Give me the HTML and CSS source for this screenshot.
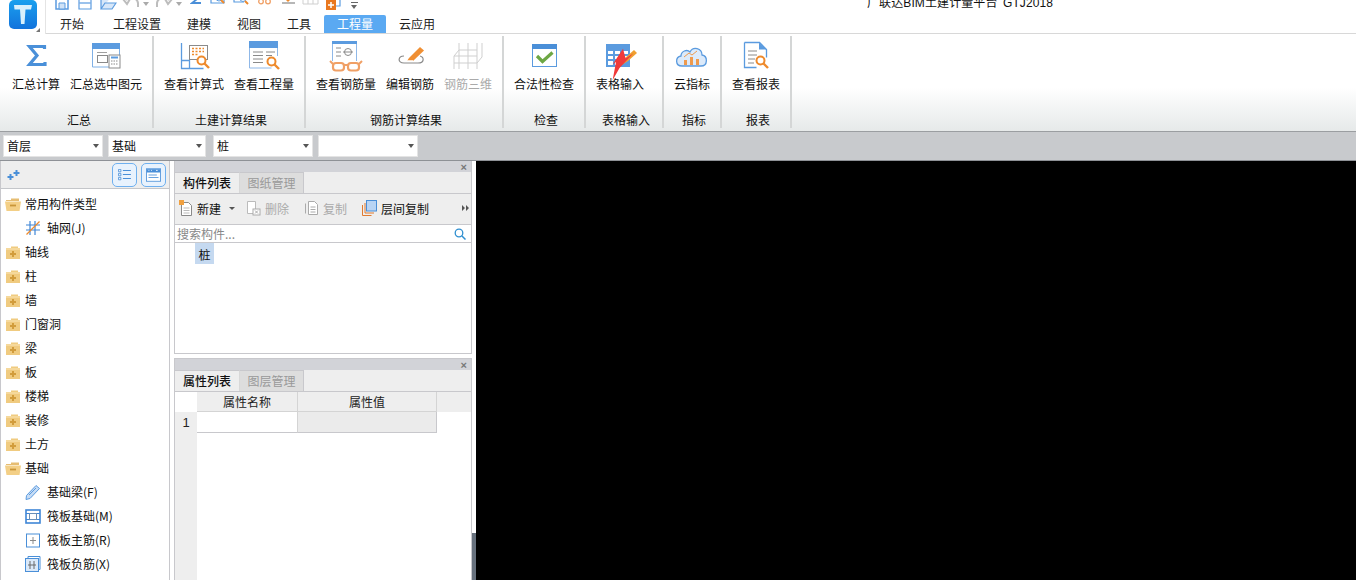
FILE: index.html
```html
<!DOCTYPE html>
<html lang="zh-CN">
<head>
  <meta charset="UTF-8" />
  <title>广联达BIM土建计量平台 GTJ2018</title>
  <link rel="stylesheet" href="styles.css">
</head>
<body>

<svg class="defs" width="0" height="0">
  <symbol id="folder" viewBox="0 0 16 14">
    <path d="M1 3h5V1.500h7V3h2v11H1z" fill="#f0cb80"/>
    <path d="M1 4h14" stroke="#fbe6b8" stroke-width="1"/>
    <path d="M8 6v6M5 9h6" stroke="#d29c3c" stroke-width="2"/>
  </symbol>
  <symbol id="folder-open" viewBox="0 0 16 14">
    <path d="M1 3h5V1.500h8V4H1z" fill="#e6bd72"/>
    <path d="M0 4.500h16l-1.500 9.500H1.500z" fill="#f3cf86"/>
    <path d="M5 8.500h6" stroke="#c99639" stroke-width="1.800"/>
  </symbol>
  <symbol id="lens" viewBox="0 0 14 14">
    <circle cx="5.500" cy="5.500" r="4" fill="#fff" stroke="#ee8a2c" stroke-width="2"/>
    <path d="M8.500 8.500l4.500 4.500" stroke="#ee8a2c" stroke-width="2.400"/>
  </symbol>
</svg>

<header class="topbar">
  <div class="logo-box">
    <svg class="logo" width="28" height="29" viewBox="0 0 28 29">
      <defs>
        <linearGradient id="logoFill" x1="0" y1="0" x2="0" y2="1">
          <stop offset="0" stop-color="#1aa0ee"/>
          <stop offset="1" stop-color="#1273dc"/>
        </linearGradient>
      </defs>
      <rect width="28" height="29" rx="5" fill="url(#logoFill)"/>
      <path d="M5 5h18l-1 4.500h-5.500L15.500 24h-3.500L11 9.500H5.500z" fill="#d8f0fc"/>
    </svg>
    <i class="logo-corner"></i>
  </div>
  <div class="top-right">
    <div class="quick">
      <svg class="q q-save" width="14" height="16" viewBox="0 0 14 16"><path d="M1 0h12v15H1z" fill="#fff" stroke="#5b9bdf" stroke-width="1.500"/><path d="M4 9h6v6H4z" fill="#cfe2f7" stroke="#5b9bdf"/></svg>
      <svg class="q q-saveas" width="14" height="16" viewBox="0 0 14 16"><path d="M1 0h12v15H1z" fill="#fff" stroke="#5b9bdf" stroke-width="1.200"/><path d="M1 9h12" stroke="#7aaee6" stroke-width="1.500"/></svg>
      <svg class="q q-open" width="17" height="16" viewBox="0 0 17 16"><path d="M1 15V4h4l9-4M1 15l4-6h11l-4 6z" fill="#d7e7f9" stroke="#5b9bdf" stroke-width="1.200"/></svg>
      <svg class="q q-undo" width="18" height="16" viewBox="0 0 18 16"><path d="M4 6c4-3 11-3 12 3v4M1 5l4 5 3-5" fill="none" stroke="#bdbdbd" stroke-width="2"/></svg>
      <i class="q-caret"></i>
      <svg class="q q-redo" width="18" height="16" viewBox="0 0 18 16"><path d="M14 6c-4-3-11-3-12 3v4M17 5l-4 5-3-5" fill="none" stroke="#bdbdbd" stroke-width="2"/></svg>
      <i class="q-caret"></i>
      <svg class="q q-sum" width="11" height="16" viewBox="0 0 11 16"><path d="M10 1H2l4.500 4.500L2 9h9" fill="none" stroke="#4a8fd8" stroke-width="1.800"/></svg>
      <svg class="q q-calc" width="16" height="16" viewBox="0 0 16 16"><path d="M1 0v9h13V0" fill="none" stroke="#5b9bdf" stroke-width="1.200"/><circle cx="9" cy="4" r="3" fill="#fff" stroke="#5b9bdf"/><path d="M11 6l3 3" stroke="#ee8a2c" stroke-width="2"/></svg>
      <svg class="q q-qty" width="16" height="16" viewBox="0 0 16 16"><path d="M1 0v8h10M3 3h4M3 5.500h3" fill="none" stroke="#5b9bdf" stroke-width="1.200"/><circle cx="10" cy="4.500" r="3" fill="#fff" stroke="#5b9bdf"/><path d="M12 7l3 3" stroke="#ee8a2c" stroke-width="2"/></svg>
      <svg class="q q-glass" width="15" height="16" viewBox="0 0 15 16"><path d="M2 0h11v5H2z" fill="none" stroke="#e8c4a8"/><circle cx="4" cy="7.500" r="2.300" fill="none" stroke="#f0a066" stroke-width="1.300"/><circle cx="11" cy="7.500" r="2.300" fill="none" stroke="#f0a066" stroke-width="1.300"/></svg>
      <svg class="q q-pen" width="15" height="16" viewBox="0 0 15 16"><path d="M5 6l6-6 2 2-6 6z" fill="#ee8a2c"/><path d="M1 9h13" stroke="#888" stroke-width="1.200"/></svg>
      <svg class="q q-grid" width="17" height="16" viewBox="0 0 17 16"><path d="M1 1l4-1h11v10H1zM1 5h15M6 0v10M11 0v10" fill="none" stroke="#cfcfcf"/></svg>
      <svg class="q q-add" width="15" height="18" viewBox="0 0 15 18"><path d="M9 0h5v12H9" fill="none" stroke="#5b9bdf" stroke-width="1.200"/><rect y="6" width="10" height="10" fill="#e9781f"/><path d="M5 8v6M2 11h6" stroke="#fff" stroke-width="1.500"/></svg>
      <i class="q-more"></i>
      <span class="app-title">广联达BIM土建计量平台 GTJ2018</span>
    </div>
    <nav class="tabs">
      <span class="tab tab-first">开始</span>
      <span class="tab">工程设置</span>
      <span class="tab">建模</span>
      <span class="tab">视图</span>
      <span class="tab">工具</span>
      <span class="tab active">工程量</span>
      <span class="tab">云应用</span>
    </nav>
  </div>
</header>

<section class="ribbon">
  <div class="group g-sum">
    <div class="btns">
      <div class="btn">
        <svg width="36" height="32" viewBox="0 0 36 32"><path d="M26.500 9V6.500H11.500L19 15.500 11.500 24.500H27V22" fill="none" stroke="#4a90d9" stroke-width="3.200"/></svg>
        <span>汇总计算</span>
      </div>
      <div class="btn">
        <svg width="36" height="32" viewBox="0 0 36 32"><path d="M4.500 8h27v19h-27z" fill="#fff" stroke="#7fb0e6"/><rect x="4" y="3" width="28" height="6" fill="#5b9bdf"/><rect x="9.500" y="15.500" width="10" height="7" fill="none" stroke="#8a8a8a"/><path d="M9 12.500h10" stroke="#a0a0a0"/><rect x="21" y="15" width="11" height="13" fill="#fff" stroke="#8a8a8a"/><path d="M23 17.500h7" stroke="#5b9bdf" stroke-width="2"/><path d="M23 21h7M23 24h7" stroke="#8a8a8a" stroke-dasharray="1.500 1"/></svg>
        <span>汇总选中图元</span>
      </div>
    </div>
    <div class="group-name">汇总</div>
  </div>

  <div class="group g-civil">
    <div class="btns">
      <div class="btn">
        <svg width="36" height="32" viewBox="0 0 36 32"><path d="M5.500 3v25.500h22M5.500 20.500h8v8" fill="none" stroke="#5b9bdf" stroke-width="1.300"/><rect x="13.500" y="5.500" width="18" height="14" fill="#fff" stroke="#8a8a8a"/><path d="M16 8.500h12M16 11.500h12M16 14.500h6" stroke="#ee8a2c" stroke-width="1.600" stroke-dasharray="2 1.500"/><use href="#lens" x="20" y="15" width="14" height="14"/></svg>
        <span>查看计算式</span>
      </div>
      <div class="btn">
        <svg width="36" height="32" viewBox="0 0 36 32"><rect x="3" y="1" width="29" height="7" fill="#5b9bdf"/><path d="M3.500 8v20h22M31.500 8v8" fill="none" stroke="#8fb8e8"/><path d="M7 12h10M7 15.500h10M7 19h10M7 22.500h10M20 12h9M20 15.500h6" stroke="#8a8a8a"/><use href="#lens" x="20" y="16" width="14" height="14"/></svg>
        <span>查看工程量</span>
      </div>
    </div>
    <div class="group-name">土建计算结果</div>
  </div>

  <div class="group g-rebar">
    <div class="btns">
      <div class="btn">
        <svg width="36" height="32" viewBox="0 0 36 32"><rect x="4" y="1" width="25" height="3" fill="#5b9bdf"/><path d="M4.500 4v17M28.500 4v17" fill="none" stroke="#8fb8e8"/><path d="M8 8h5M8 12h5M8 16h5M15 12h10" stroke="#8a8a8a"/><circle cx="20" cy="12" r="3.500" fill="none" stroke="#8a8a8a"/><rect x="5" y="23" width="11" height="7.500" rx="3" fill="#fff" stroke="#f0a066" stroke-width="2.200"/><rect x="20" y="23" width="11" height="7.500" rx="3" fill="#fff" stroke="#f0a066" stroke-width="2.200"/><path d="M16 25h4M5 24l-3-3M31 24l3-3" stroke="#f0a066" stroke-width="2"/></svg>
        <span>查看钢筋量</span>
      </div>
      <div class="btn">
        <svg width="36" height="32" viewBox="0 0 36 32"><path d="M17 18l11-11 4 3.500-11 10.500h-6z" fill="#f08f33"/><path d="M12 16c-6 0-7 7 0 7h14c7 0 6-6 2-7" fill="none" stroke="#8a8a8a" stroke-width="1.200"/><path d="M15 21h6" stroke="#fff" stroke-width="1.500"/></svg>
        <span>编辑钢筋</span>
      </div>
      <div class="btn">
        <svg width="36" height="32" viewBox="0 0 36 32"><path d="M9 3v26M18 3v26M27 3v26M9 10l-5 6h23M4 16v13M27 10H9M4 23h23l5-6M32 3v14" fill="none" stroke="#cfcfcf"/></svg>
        <span class="off">钢筋三维</span>
      </div>
    </div>
    <div class="group-name">钢筋计算结果</div>
  </div>

  <div class="group g-check">
    <div class="btns">
      <div class="btn">
        <svg width="36" height="32" viewBox="0 0 36 32"><rect x="6.500" y="4.500" width="24" height="22" fill="#fff" stroke="#5b9bdf"/><rect x="6" y="4" width="25" height="5" fill="#4a8fd8"/><path d="M11 16l5.500 5.500 10-9" fill="none" stroke="#6da744" stroke-width="3.200"/></svg>
        <span>合法性检查</span>
      </div>
    </div>
    <div class="group-name">检查</div>
  </div>

  <div class="group g-table">
    <div class="btns">
      <div class="btn">
        <svg width="36" height="32" viewBox="0 0 36 32"><rect x="4" y="4" width="24" height="23" fill="#5b9bdf"/><path d="M6 11h5v3H6zM13 11h5v3h-5zM20 11h6v3h-6zM6 16h5v3H6zM13 16h5v3h-5zM20 16h6v3h-6zM6 21h5v4H6zM13 21h5v4h-5z" fill="#fff"/><path d="M20 25l3-7 9-8 3 3-9 8z" fill="#f0a030"/></svg>
        <span>表格输入</span>
      </div>
    </div>
    <div class="group-name">表格输入</div>
  </div>

  <div class="group g-cloud">
    <div class="btns">
      <div class="btn">
        <svg width="36" height="32" viewBox="0 0 36 32"><path d="M8 26c-7 0-7-9-1-10 0-5 6-7 9-4 3-6 12-4 12 3 6 1 6 11-1 11z" fill="#dceafa" stroke="#5b9bdf" stroke-width="1.300"/><path d="M10 25v-5h3v5zM16 25v-8h3v8zM22 25v-6h3v6z" fill="#ee9a4d"/><path d="M10 17l5-4 3 2 5-4" fill="none" stroke="#ee9a4d"/></svg>
        <span>云指标</span>
      </div>
    </div>
    <div class="group-name">指标</div>
  </div>

  <div class="group g-report">
    <div class="btns">
      <div class="btn">
        <svg width="36" height="32" viewBox="0 0 36 32"><path d="M6.500 2.500h15l7 7v8M6.500 2.500v25h12" fill="#fff" stroke="#5b9bdf" stroke-width="1.300"/><path d="M21 2.500v7h7.500z" fill="#5b9bdf"/><path d="M10 11h9M10 15h9M10 19h7M10 23h6" stroke="#8a8a8a"/><use href="#lens" x="17" y="15" width="14" height="14"/></svg>
        <span>查看报表</span>
      </div>
    </div>
    <div class="group-name">报表</div>
  </div>

  <svg class="red-arrow" width="24" height="33" viewBox="0 0 26 38"><path d="M1 37L5 16 1 19 13 1 16 12 25 6 9 23z" fill="#f03a3a"/></svg>
</section>

<div class="selbar">
  <div class="sel sel-a"><span>首层</span><i></i></div>
  <div class="sel sel-b"><span>基础</span><i></i></div>
  <div class="sel sel-c"><span>桩</span><i></i></div>
  <div class="sel sel-d"><span></span><i></i></div>
</div>

<main class="main">
  <aside class="side">
    <div class="side-head">
      <svg class="spark" width="13" height="10" viewBox="0 0 13 10"><path d="M3.500 4v6M0.500 7h6M9.500 0v6M6.500 3h6" stroke="#4a8fd8" stroke-width="2"/></svg>
      <span class="side-btn">
        <svg width="13" height="12" viewBox="0 0 16 15"><path d="M.5.500h3v3h-3zM.5 5.500h3v3h-3zM.5 10.500h3v3h-3z" fill="none" stroke="#4a8fd8"/><path d="M6 2h10M6 7h10M6 12h10" stroke="#4a8fd8" stroke-width="1.300"/></svg>
      </span>
      <span class="side-btn">
        <svg width="15" height="14" viewBox="0 0 18 16"><rect x=".5" y=".5" width="17" height="15" fill="#fff" stroke="#4a8fd8"/><rect x="1" y="1" width="16" height="4" fill="#4a8fd8"/><path d="M3 2.500h1M6 2.500h1M12 2.500h2" stroke="#fff"/><path d="M3 8h10M3 11h12" stroke="#4a8fd8"/></svg>
      </span>
    </div>
    <ul class="tree">
      <li class="row"><svg class="ficon" width="16" height="14"><use href="#folder-open"/></svg>常用构件类型</li>
      <li class="row child">
        <svg class="cicon" width="16" height="16" viewBox="0 0 16 16"><path d="M5 1v14M10 1v14M1 5h14M1 10h14" stroke="#3f86d6" stroke-width="1.200"/><path d="M14.500 1.500L1.500 14.500" stroke="#ee8a2c" stroke-width="1.200"/></svg>轴网(J)
      </li>
      <li class="row"><svg class="ficon" width="16" height="14"><use href="#folder"/></svg>轴线</li>
      <li class="row"><svg class="ficon" width="16" height="14"><use href="#folder"/></svg>柱</li>
      <li class="row"><svg class="ficon" width="16" height="14"><use href="#folder"/></svg>墙</li>
      <li class="row"><svg class="ficon" width="16" height="14"><use href="#folder"/></svg>门窗洞</li>
      <li class="row"><svg class="ficon" width="16" height="14"><use href="#folder"/></svg>梁</li>
      <li class="row"><svg class="ficon" width="16" height="14"><use href="#folder"/></svg>板</li>
      <li class="row"><svg class="ficon" width="16" height="14"><use href="#folder"/></svg>楼梯</li>
      <li class="row"><svg class="ficon" width="16" height="14"><use href="#folder"/></svg>装修</li>
      <li class="row"><svg class="ficon" width="16" height="14"><use href="#folder"/></svg>土方</li>
      <li class="row"><svg class="ficon" width="16" height="14"><use href="#folder-open"/></svg>基础</li>
      <li class="row child">
        <svg class="cicon" width="16" height="16" viewBox="0 0 16 16"><path d="M1.500 11.500l9.500-10 3.500 3-9.500 10-4 1z" fill="#c6dcf5" stroke="#5b9bdf"/><path d="M4 11l7-7" stroke="#5b9bdf"/></svg>基础梁(F)
      </li>
      <li class="row child">
        <svg class="cicon" width="16" height="16" viewBox="0 0 16 16"><rect x="1" y="2" width="14" height="13" fill="none" stroke="#3f86d6" stroke-width="1.600"/><rect x="4.500" y="5.500" width="7" height="6" fill="none" stroke="#6a8fb8"/><path d="M1 5.500h3M12 5.500h3M1 11.500h3M12 11.500h3" stroke="#3f86d6"/></svg>筏板基础(M)
      </li>
      <li class="row child">
        <svg class="cicon" width="16" height="16" viewBox="0 0 16 16"><rect x="1.500" y="2" width="13" height="13" fill="#fff" stroke="#4a8fd8"/><path d="M8 5v7M5 8.500h6" stroke="#8a8a8a"/></svg>筏板主筋(R)
      </li>
      <li class="row child">
        <svg class="cicon" width="16" height="16" viewBox="0 0 16 16"><path d="M3 2V.5h12v13h-1" fill="none" stroke="#4a8fd8"/><rect x=".5" y="2.500" width="13" height="13" fill="#dbe9f9" stroke="#4a8fd8"/><path d="M5 5v8M9 5v8M3 9h8" stroke="#6a6a6a"/></svg>筏板负筋(X)
      </li>
    </ul>
  </aside>

  <div class="mid">
    <div class="panel panel-top">
      <div class="strip"><span>×</span></div>
      <div class="ptabs"><span class="ptab on">构件列表</span><span class="ptab">图纸管理</span></div>
      <div class="ptools">
        <span class="tool t-new">
          <svg width="14" height="16" viewBox="0 0 14 16"><path d="M2.500 2.500h7l3 3v10h-10z" fill="#fff" stroke="#8a8a8a"/><path d="M4.500 8h6M4.500 10.500h6M4.500 13h6" stroke="#bbb"/><rect width="5" height="5" fill="#f0a040"/></svg>
          新建<i class="drop"></i>
        </span>
        <span class="tool off t-del">
          <svg width="15" height="16" viewBox="0 0 15 16"><path d="M1.500 1.500h8v12h-8z" fill="#fff" stroke="#bbb"/><rect x="7" y="9" width="7" height="6" fill="#fff" stroke="#aaa"/><path d="M9 10.500l3 3M12 10.500l-3 3" stroke="#aaa"/></svg>
          删除
        </span>
        <span class="tool off t-copy">
          <svg width="14" height="16" viewBox="0 0 14 16"><path d="M3.500 1.500h6l3 3v10h-9z" fill="#fff" stroke="#aaa"/><path d="M.5 3.500v10" stroke="#aaa"/><path d="M5.500 7h5M5.500 9.500h5M5.500 12h5" stroke="#aaa"/></svg>
          复制
        </span>
        <span class="tool t-floor">
          <svg width="15" height="16" viewBox="0 0 15 16"><path d="M.5 5v10.500h9M3 3v10h9" fill="none" stroke="#e07a30"/><rect x="4.500" y=".5" width="10" height="10.500" fill="#b8d4f4" stroke="#4a8fd8"/></svg>
          层间复制
        </span>
        <svg class="more" width="7" height="6" viewBox="0 0 7 6"><path d="M0 0l3 3-3 3zM4 0l3 3-3 3z" fill="#555"/></svg>
      </div>
      <div class="search">
        <span>搜索构件...</span>
        <svg width="12" height="12" viewBox="0 0 12 12"><circle cx="5" cy="5" r="3.800" fill="none" stroke="#2f8fd0" stroke-width="1.300"/><path d="M8 8l3.500 3.500" stroke="#2f8fd0" stroke-width="1.500"/></svg>
      </div>
      <div class="plist"><span class="picked">桩</span></div>
    </div>

    <div class="panel panel-bottom">
      <div class="strip"><span>×</span></div>
      <div class="ptabs"><span class="ptab on">属性列表</span><span class="ptab">图层管理</span></div>
      <div class="props">
        <div class="ph-blank"></div>
        <div class="ph">属性名称</div>
        <div class="ph">属性值</div>
        <div class="ph-end"></div>
        <div class="rownum">1</div>
        <div class="cell-name"></div>
        <div class="cell-val"></div>
        <div></div>
        <div class="rest-num"></div>
        <div class="rest"></div>
      </div>
    </div>
  </div>

  <div class="vscroll"><div class="thumb"></div></div>
  <div class="canvas"></div>
</main>

</body>
</html>
```

FILE: styles.css
```css
* { box-sizing: border-box; }
html, body { margin: 0; height: 580px; overflow: hidden; }
body { width: 1356px; background: #fff; color: #111; font: 12px "Noto Sans CJK SC", "Liberation Sans", sans-serif; display: flex; flex-direction: column; }
.defs { position: absolute; }
svg { display: block; flex: none; }
i { display: block; }
ul { list-style: none; margin: 0; padding: 0; }

/* title area */
.topbar { height: 34px; flex: none; display: flex; }
.logo-box { width: 46px; border-right: 1px solid #e4e4e4; padding-left: 9px; position: relative; }
.logo-corner { position: absolute; left: 36px; top: 28px; width: 0; height: 0; border-left: 4px solid transparent; border-bottom: 4px solid #777; }
.top-right { flex: 1; display: flex; flex-direction: column; border-bottom: 1px solid #d8d8d8; }
.quick { height: 15px; display: flex; align-items: flex-start; }
.q { margin-top: -6px; }
.q-save { margin-left: 9px; }
.q-saveas { margin-left: 9px; }
.q-open { margin-left: 8px; }
.q-undo { margin-left: 5px; }
.q-redo { margin-left: 6px; }
.q-sum { margin-left: 8px; }
.q-calc { margin-left: 9px; }
.q-qty { margin-left: 7px; }
.q-glass { margin-left: 8px; }
.q-pen { margin-left: 9px; }
.q-grid { margin-left: 6px; }
.q-add { margin-left: 7px; }
.q-caret { width: 0; height: 0; margin: 2px 0 0 3px; border: 3px solid transparent; border-top: 4px solid #aaa; border-bottom: 0; }
.q-more { width: 7px; height: 6px; margin: 2px 0 0 10px; border-top: 1px solid #666; position: relative; }
.q-more::after { content: ""; position: absolute; left: 0; top: 2px; border: 3.500px solid transparent; border-top: 4px solid #666; border-bottom: 0; }
.app-title { margin-left: 509px; line-height: 6px; white-space: nowrap; font-family: "Liberation Sans", "Noto Sans CJK SC", sans-serif; word-spacing: 2px; letter-spacing: .1px; }
.tabs { flex: 1; display: flex; align-items: stretch; margin-left: 1px; }
.tab { padding: 0 13px; line-height: 17px; color: #222; height: 18px; }
.tab-first { margin-right: 3px; }
.tab.active { background: #5aa9f2; color: #fff; border-radius: 2px 2px 0 0; }

/* ribbon */
.ribbon { height: 98px; flex: none; display: flex; position: relative; background: linear-gradient(#fff 55%, #e6e9e9); border-bottom: 1px solid #9b9ea1; }
.group { height: 92px; margin-top: 2px; border-right: 2px solid #d4d6d6; display: flex; flex-direction: column; padding-left: 10px; }
.g-sum { width: 154px; padding-left: 12px; }
.g-civil { width: 152px; }
.g-rebar { width: 198px; }
.g-check { width: 82px; }
.g-table { width: 78px; }
.g-cloud { width: 58px; }
.g-report { width: 70px; }
.btns { display: flex; gap: 10px; height: 76px; }
.btn { display: flex; flex-direction: column; align-items: center; white-space: nowrap; }
.btn svg { margin-top: 4px; }
.btn span { line-height: 18px; margin-top: 3px; }
.btn .off { color: #aaa; }
.group-name { margin-left: -6px; text-align: center; line-height: 16px; }
.red-arrow { position: absolute; left: 611px; top: 14px; }

/* dropdown bar */
.selbar { height: 28px; flex: none; background: #c8cacd; display: flex; align-items: center; padding: 0 0 0 3px; }
.sel { height: 22px; background: #fff; border: 1px solid #e4e4e4; display: flex; align-items: center; justify-content: space-between; padding: 0 3px 1px; }
.sel i { width: 0; height: 0; border: 3px solid transparent; border-top: 4px solid #555; border-bottom: 0; }
.sel-a { width: 100px; }
.sel-b { width: 98px; margin-left: 5px; }
.sel-c { width: 100px; margin-left: 7px; }
.sel-d { width: 100px; margin-left: 5px; }

/* main area */
.main { flex: 1; display: flex; min-height: 0; border-top: 1px solid #8e9196; }
.side { width: 170px; flex: none; border-left: 1px solid #c8c8cc; border-right: 1px solid #c8c8cc; overflow: hidden; }
.side-head { height: 28px; background: #eee; border-bottom: 1px solid #c4c6ca; display: flex; align-items: center; padding: 0 3px 0 6px; gap: 4px; }
.spark { margin-right: auto; }
.side-btn { width: 25px; height: 24px; border: 1px solid #6fb0ef; border-radius: 5px; background: #e8f2fd; display: flex; align-items: center; justify-content: center; }
.tree { padding-top: 3px; }
.row { height: 24px; display: flex; align-items: center; padding-left: 4px; line-height: 24px; white-space: nowrap; }
.ficon { margin-right: 4px; }
.child { padding-left: 24px; }
.cicon { margin-right: 6px; }

.mid { width: 298px; flex: none; margin-left: 4px; display: flex; flex-direction: column; gap: 4px; }
.panel { border: 1px solid #c8c8cc; border-top: 0; display: flex; flex-direction: column; }
.panel-top { height: 193px; }
.panel-bottom { flex: 1; min-height: 0; border-top: 1px solid #c8c8cc; border-bottom: 0; }
.strip { height: 11px; flex: none; background: #d2d3d8; display: flex; justify-content: flex-end; align-items: center; padding-right: 4px; color: #777; font: bold 11px "Liberation Sans", sans-serif; }
.ptabs { height: 22px; flex: none; background: #eee; display: flex; border-bottom: 1px solid #c8c8cc; }
.ptab { width: 64px; text-align: center; line-height: 19px; color: #999; background: #ddd; border-right: 1px solid #c8c8cc; border-top: 1px solid #c8c8cc; }
.ptab.on { color: #111; background: #eee; width: 65px; font-weight: 500; border-right: 1px solid #d8d8d8; }

.ptools { height: 30px; flex: none; background: #eee; display: flex; align-items: center; padding: 0 0 2px 4px; }
.tool { display: flex; align-items: center; gap: 4px; white-space: nowrap; }
.tool.off { color: #aaa; }
.t-del { margin-left: 11px; }
.t-copy { margin-left: 16px; }
.t-floor { margin-left: 15px; }
.drop { width: 0; height: 0; margin-left: 4px; border: 3px solid transparent; border-top: 3px solid #555; border-bottom: 0; }
.more { margin-left: auto; margin-right: 2px; }

.search { height: 19px; flex: none; display: flex; align-items: center; justify-content: space-between; padding: 0 5px 0 2px; border-top: 1px solid #c8c8cc; border-bottom: 1px solid #c8c8cc; color: #888; }
.plist { flex: 1; padding-left: 20px; }
.picked { display: block; width: 19px; height: 21px; background: #c5d9f0; line-height: 23px; text-align: center; }

.props { flex: 1; min-height: 0; display: grid; grid-template-columns: 22px 101px 139px 1fr; grid-template-rows: 20px 21px 1fr; color: #222; }
.ph { background: #eee; border-right: 1px solid #d4d4d4; border-bottom: 1px solid #d4d4d4; text-align: center; line-height: 19px; }
.ph-end { background: #eee; }
.rownum { background: #eee; text-align: center; line-height: 21px; font-family: "Liberation Sans", sans-serif; font-size: 13px; }
.cell-name { border-bottom: 1px solid #c8c8cc; border-right: 1px solid #d4d4d4; }
.cell-val { background: #ebebeb; border-bottom: 1px solid #c8c8cc; border-right: 1px solid #c8c8cc; }
.rest-num { background: #eee; }
.rest { grid-column: 2 / 5; }

.vscroll { width: 4px; flex: none; display: flex; align-items: flex-end; }
.thumb { width: 4px; height: 47px; background: #67717d; }
.canvas { flex: 1; background: #000; }
```
